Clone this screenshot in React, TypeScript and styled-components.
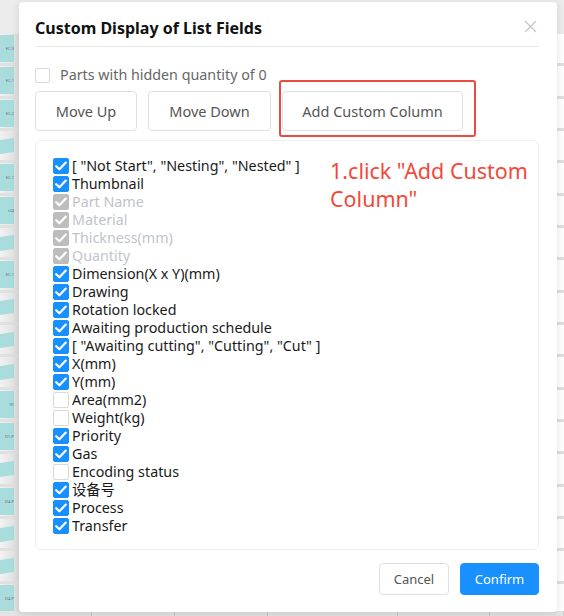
import React from 'react';
import styled, { createGlobalStyle } from 'styled-components';

const GlobalStyle = createGlobalStyle`
  html, body {
    margin: 0;
    padding: 0;
    background: #f2f2f2;
    font-family: "Noto Sans", "Noto Sans CJK SC", sans-serif;
  }
  #root {
    width: 564px;
    height: 616px;
    overflow: hidden;
  }
`;

type Field = { label: string; checked: boolean; disabled?: boolean };

const FIELDS: Field[] = [
  { label: '[ "Not Start", "Nesting", "Nested" ]', checked: true },
  { label: 'Thumbnail', checked: true },
  { label: 'Part Name', checked: true, disabled: true },
  { label: 'Material', checked: true, disabled: true },
  { label: 'Thickness(mm)', checked: true, disabled: true },
  { label: 'Quantity', checked: true, disabled: true },
  { label: 'Dimension(X x Y)(mm)', checked: true },
  { label: 'Drawing', checked: true },
  { label: 'Rotation locked', checked: true },
  { label: 'Awaiting production schedule', checked: true },
  { label: '[ "Awaiting cutting", "Cutting", "Cut" ]', checked: true },
  { label: 'X(mm)', checked: true },
  { label: 'Y(mm)', checked: true },
  { label: 'Area(mm2)', checked: false },
  { label: 'Weight(kg)', checked: false },
  { label: 'Priority', checked: true },
  { label: 'Gas', checked: true },
  { label: 'Encoding status', checked: false },
  { label: '设备号', checked: true },
  { label: 'Process', checked: true },
  { label: 'Transfer', checked: true },
];

const THUMBS = ['EC-3', 'EC-1', 'EC-2', '', 'EC-1', 't24', '', 'EC-1', '', '', '', '91', 'D1-P', '', 'D4-P', '', '', 'D4-P'];

/* ---------- page behind the dialog ---------- */

const Page = styled.div`
  position: relative;
  width: 564px;
  height: 616px;
  background: #ececec;
  display: flex;
  flex-direction: column;
  padding-top: 34px;
  box-sizing: border-box;
`;

const BgRow = styled.div`
  height: 30px;
  display: flex;
  align-items: center;
  border-bottom: 3px solid #e0e0e0;
  background: linear-gradient(90deg, #f2f2f2, #dcdcdc 19px, #fff 30px);
`;

const Thumb = styled.div<{ $slant: boolean }>`
  width: 14px;
  height: ${({ $slant }) => ($slant ? '14px' : '27px')};
  background: #a9dcdc;
  font-size: 4px;
  color: #668;
  overflow: hidden;
  display: flex;
  align-items: center;
  justify-content: flex-end;
  transform: ${({ $slant }) => ($slant ? 'skewY(-8deg)' : 'none')};
`;

const BottomStrip = styled.div`
  position: absolute;
  left: 0;
  right: 0;
  bottom: 0;
  height: 5px;
  background: #e4e4e4;
  display: flex;
`;

const BottomCell = styled.div<{ $w: number }>`
  width: ${({ $w }) => $w}px;
  border-right: 1px solid #c8c8c8;
`;

/* ---------- dialog ---------- */

const Dialog = styled.div`
  position: absolute;
  left: 19px;
  top: 2px;
  width: 538px;
  height: 610px;
  background: #fff;
  border-radius: 4px;
  box-shadow: 0 2px 8px rgba(0, 0, 0, 0.12);
  box-sizing: border-box;
  padding: 0 18px 0 16px;
  display: flex;
  flex-direction: column;
`;

const Header = styled.div`
  height: 44px;
  display: flex;
  align-items: center;
  justify-content: space-between;
  border-bottom: 1px solid #e8e8e8;
`;

const Title = styled.h2`
  margin: 7px 0 0;
  font-size: 16px;
  line-height: 22px;
  font-weight: 700;
  color: #111;
`;

const Close = styled.button`
  border: none;
  background: none;
  padding: 0;
  width: 13px;
  height: 13px;
  margin-right: 2px;
  margin-top: 4px;
  cursor: pointer;
  display: flex;
`;

const HiddenRow = styled.label`
  display: flex;
  align-items: center;
  gap: 10px;
  margin-top: 18px;
  font-size: 14.3px;
  line-height: 20px;
  color: #666;
  height: 20px;
`;

const Toolbar = styled.div`
  display: flex;
  gap: 11px;
  margin-top: 2px;
  height: 51px;
  align-items: flex-start;
`;

const ToolButton = styled.button<{ $w: number }>`
  width: ${({ $w }) => $w}px;
  height: 40px;
  margin-top: 4px;
  border: 1px solid #dcdfe6;
  border-radius: 4px;
  background: #fff;
  color: #555;
  font-family: inherit;
  font-size: 14.5px;
  cursor: pointer;
`;

const Highlight = styled.div`
  border: 2px solid #eb4a40;
  border-radius: 3px;
  padding: 9px 11px 4px 1px;
  margin: -7px 0 0 -3px;
  display: flex;

  & > button {
    margin-top: 0;
  }
`;

const ListBox = styled.div`
  position: relative;
  height: 410px;
  margin-top: 2px;
  border: 1px solid #ebeef5;
  border-radius: 6px;
  box-sizing: border-box;
  padding: 16px 17px 0;
  display: flex;
  flex-direction: column;
`;

const Item = styled.label<{ $disabled?: boolean }>`
  display: flex;
  align-items: center;
  gap: 3px;
  height: 18px;
  line-height: 18px;
  font-size: 14.3px;
  color: ${({ $disabled }) => ($disabled ? '#c0c4cc' : '#1a1a1a')};
  white-space: nowrap;
`;

const Box = styled.span<{ $checked: boolean; $disabled?: boolean; $size: number }>`
  width: ${({ $size }) => $size}px;
  height: ${({ $size }) => $size}px;
  box-sizing: border-box;
  border-radius: 2px;
  flex: none;
  display: flex;
  align-items: center;
  justify-content: center;
  border: 1px solid
    ${({ $checked, $disabled }) =>
      $checked ? ($disabled ? '#bdbdbd' : '#1890ff') : '#d9d9d9'};
  background: ${({ $checked, $disabled }) =>
    $checked ? ($disabled ? '#bdbdbd' : '#1890ff') : '#fff'};
`;

const Note = styled.div`
  position: absolute;
  left: 294px;
  top: 16px;
  color: #f5483b;
  font-size: 21.5px;
  line-height: 28px;
  width: 212px;
`;

const Footer = styled.div`
  display: flex;
  justify-content: flex-end;
  gap: 11px;
  margin-top: 13px;
`;

const FootButton = styled.button<{ $primary?: boolean; $w: number }>`
  width: ${({ $w }) => $w}px;
  height: 32px;
  border-radius: 4px;
  font-family: inherit;
  font-size: 13px;
  cursor: pointer;
  border: 1px solid ${({ $primary }) => ($primary ? '#1890ff' : '#dcdfe6')};
  background: ${({ $primary }) => ($primary ? '#1890ff' : '#fff')};
  color: ${({ $primary }) => ($primary ? '#fff' : '#555')};
`;

function Check({ checked, disabled, size = 16 }: { checked: boolean; disabled?: boolean; size?: number }) {
  return (
    <Box $checked={checked} $disabled={disabled} $size={size}>
      {checked && (
        <svg width="12" height="10" viewBox="0 0 12 10">
          <path d="M1.2 5.2 L4.4 8.3 L10.8 1.6" fill="none" stroke="#fff" strokeWidth="2.2" strokeLinecap="round" strokeLinejoin="round" />
        </svg>
      )}
    </Box>
  );
}

export default function App() {
  return (
    <>
      <GlobalStyle />
      <Page>
        {THUMBS.map((t, i) => (
          <BgRow key={i}>
            <Thumb $slant={t === ''}>{t}</Thumb>
          </BgRow>
        ))}
        <BottomStrip>
          {[92, 83, 93, 130, 92, 74].map((w, i) => (
            <BottomCell key={i} $w={w} />
          ))}
        </BottomStrip>

        <Dialog>
          <Header>
            <Title>Custom Display of List Fields</Title>
            <Close aria-label="close">
              <svg width="13" height="13" viewBox="0 0 13 13">
                <path d="M1 1 L12 12 M12 1 L1 12" stroke="#c4c7cc" strokeWidth="1.3" />
              </svg>
            </Close>
          </Header>

          <HiddenRow>
            <Check checked={false} size={15} />
            Parts with hidden quantity of 0
          </HiddenRow>

          <Toolbar>
            <ToolButton $w={102}>Move Up</ToolButton>
            <ToolButton $w={123}>Move Down</ToolButton>
            <Highlight>
              <ToolButton $w={181}>Add Custom Column</ToolButton>
            </Highlight>
          </Toolbar>

          <ListBox>
            {FIELDS.map((f) => (
              <Item key={f.label} $disabled={f.disabled}>
                <Check checked={f.checked} disabled={f.disabled} />
                {f.label}
              </Item>
            ))}
            <Note>1.click "Add Custom Column"</Note>
          </ListBox>

          <Footer>
            <FootButton $w={70}>Cancel</FootButton>
            <FootButton $primary $w={79}>Confirm</FootButton>
          </Footer>
        </Dialog>
      </Page>
    </>
  );
}
